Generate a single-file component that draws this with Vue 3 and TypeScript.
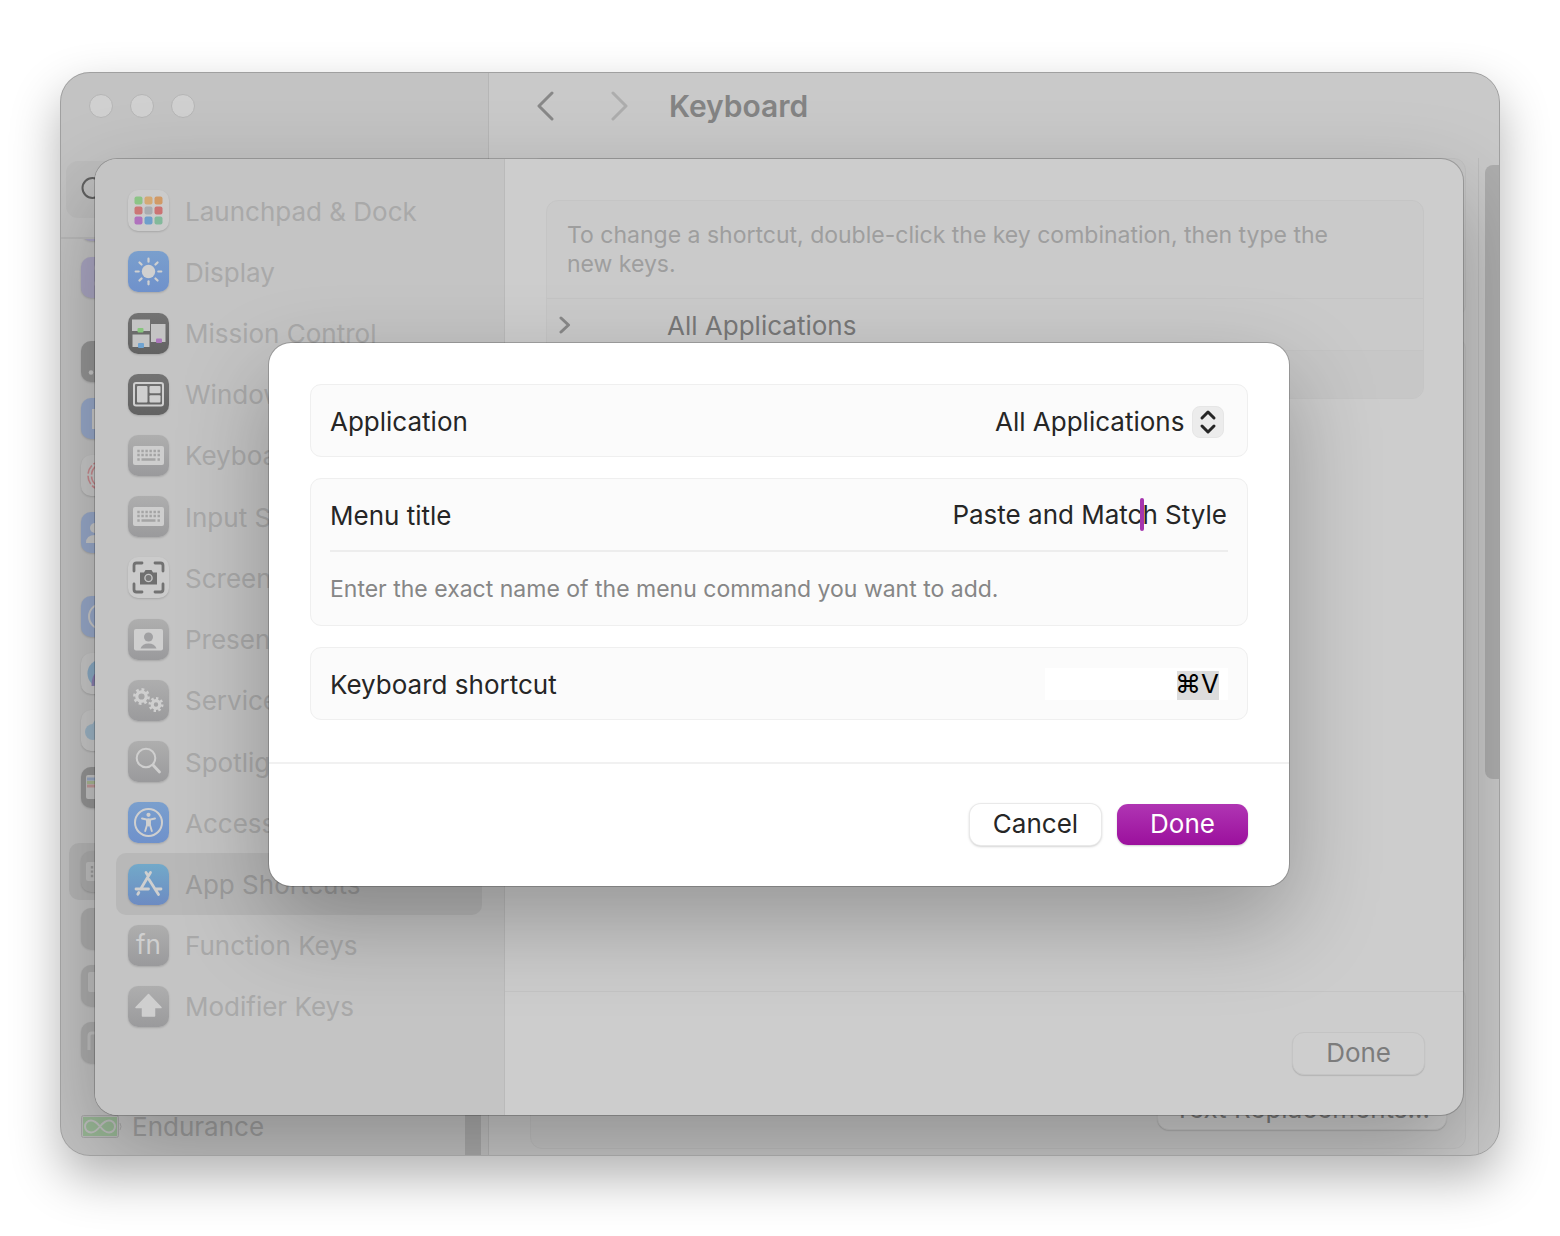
<script setup lang="ts">
import { ref } from 'vue'

interface Pane {
  label: string
  tone: string
  art: string
}

const keyboardArt =
  '<rect x="5" y="11" width="31" height="19" rx="2" fill="#cecece"/>' +
  '<g stroke="#a4a4a4" stroke-width="2.4" fill="none">' +
  '<path d="M9.3 16H32" stroke-dasharray="2.4 1.65"/><path d="M9.3 20H32" stroke-dasharray="2.4 1.65"/>' +
  '<path d="M9.3 24.5h2.4M13.5 24.5h14M29.5 24.5h2.4"/></g>'

const gear = (x: number, y: number, r: number) =>
  `<circle cx="${x}" cy="${y}" r="${r}" stroke-width="3.2"/>` +
  `<circle cx="${x}" cy="${y}" r="${r + 2.4}" stroke-width="2.6" pathLength="16" stroke-dasharray="1 1"/>`

const launchColors = ['#8cc486', '#d3a975', '#d19a66', '#cb7676', '#a9acb0', '#cb7373', '#b072bd', '#6f9fcb', '#83b99b']

const panes: Pane[] = [
  {
    label: 'Launchpad & Dock',
    tone: 'white',
    art: launchColors
      .map((c, i) => `<rect x="${6.5 + (i % 3) * 10}" y="${6.5 + Math.floor(i / 3) * 10}" width="8" height="8" rx="2" fill="${c}"/>`)
      .join(''),
  },
  {
    label: 'Display',
    tone: 'blue',
    art:
      '<circle cx="20.5" cy="20.5" r="6.7" fill="#d0d0d0"/><g stroke="#d0d0d0" stroke-width="2.2" stroke-linecap="round">' +
      [0, 45, 90, 135, 180, 225, 270, 315].map((a) => `<path d="M20.5 7.7v3" transform="rotate(${a} 20.5 20.5)"/>`).join('') +
      '</g>',
  },
  {
    label: 'Mission Control',
    tone: 'dark',
    art:
      '<g fill="#c4c4c4"><rect x="4" y="6.5" width="18" height="11.5"/><rect x="4.5" y="21.5" width="17" height="12.5"/><rect x="23" y="11" width="14.5" height="18"/></g>' +
      '<rect x="9.5" y="15" width="6" height="4.5" rx="1" fill="#87c57d"/><rect x="10" y="30" width="6" height="5" rx="1" fill="#6fa3d1"/><rect x="28" y="25.5" width="6" height="4.5" rx="1" fill="#ab77bb"/>',
  },
  {
    label: 'Windows',
    tone: 'dark',
    art:
      '<rect x="6" y="9" width="29" height="22.5" rx="2" fill="none" stroke="#cfcfcf" stroke-width="2"/>' +
      '<g fill="#cfcfcf"><rect x="9" y="12" width="10.5" height="16.5" rx="1"/><rect x="21.5" y="12" width="11" height="7.3" rx="1"/><rect x="21.5" y="21.3" width="11" height="7.2" rx="1"/></g>',
  },
  { label: 'Keyboard', tone: 'gray', art: keyboardArt },
  { label: 'Input Sources', tone: 'gray', art: keyboardArt },
  {
    label: 'Screenshots',
    tone: 'white',
    art:
      '<path d="M6 14V8.5Q6 6 8.5 6H14M27 6h5.5Q35 6 35 8.5V14M35 27v5.5Q35 35 32.5 35H27M14 35H8.5Q6 35 6 32.5V27" fill="none" stroke="#727272" stroke-width="2.8" stroke-linecap="round"/>' +
      '<path d="M12 15.5h4l1.5-2.5h6l1.5 2.5h4V27.5H12Z" fill="#6f6f6f"/><circle cx="20.5" cy="21" r="3.6" fill="#777" stroke="#c4c4c4" stroke-width="1.4"/>',
  },
  {
    label: 'Presenter Overlay',
    tone: 'gray',
    art:
      '<rect x="6" y="10" width="29" height="21.5" rx="2" fill="#cfcfcf"/><circle cx="20.5" cy="18" r="4.5" fill="#a0a0a2"/><path d="M12.5 29.5q2-5 8-5t8 5Z" fill="#a0a0a2"/>',
  },
  {
    label: 'Services',
    tone: 'gray',
    art: `<g fill="none" stroke="#cfcfcf">${gear(13.5, 16.5, 4.7)}${gear(28, 24.5, 3.8)}</g>`,
  },
  {
    label: 'Spotlight',
    tone: 'gray',
    art:
      '<g fill="none" stroke="#cfcfcf" stroke-linecap="round"><circle cx="18" cy="17" r="9.3" stroke-width="2"/><path d="m25 24 6.5 7" stroke-width="2.8"/></g>',
  },
  {
    label: 'Accessibility',
    tone: 'blue',
    art:
      '<g fill="none" stroke="#cfcfcf" stroke-linecap="round" stroke-linejoin="round"><circle cx="20.5" cy="20.5" r="13.5" stroke-width="2"/>' +
      '<path d="M14 16.5l4.5 1h4l4.5-1" stroke-width="1.9"/><path d="M19 18v5l-1.8 6M22 18v5l1.8 6" stroke-width="1.9"/><path d="M20.5 18v5" stroke-width="3"/></g><circle cx="20.5" cy="12.8" r="2.1" fill="#cfcfcf"/>',
  },
  {
    label: 'App Shortcuts',
    tone: 'store',
    art:
      '<g fill="none" stroke="#cfcfcf" stroke-width="2.8" stroke-linecap="round"><path d="M22.5 8.5 13.3 24M18 8.5l2 3.2M10.8 28.5l-1 1.8M21 15.5l9.5 15M8 25h12.5M27.5 25H33"/></g>',
  },
  { label: 'Function Keys', tone: 'gray', art: '' },
  {
    label: 'Modifier Keys',
    tone: 'gray',
    art: '<path d="M20.5 8.5 33 21.5H26.5V30H14.5V21.5H8Z" fill="#cfcfcf" stroke="#cfcfcf" stroke-width="1.5" stroke-linejoin="round"/>',
  },
]

/* Only the leading edge of these icons shows beside the sheet. */
const settingsGroups: { tone: string; art: string }[][] = [
  [
    { tone: 'purple', art: '' },
    { tone: 'purple', art: '<path d="M15 8q-2 4 1 7v8q-3 3-1 6" stroke="#c4bfcf" fill="none" stroke-width="2"/>' },
  ],
  [
    { tone: 'mid', art: '<circle cx="10" cy="31.5" r="2.3" fill="#c6c6c6"/>' },
    { tone: 'dullblue', art: '<rect x="11" y="11" width="20" height="20" fill="#c9c9c9"/>' },
    {
      tone: 'pale',
      art: '<g fill="none" stroke="#c98a8e" stroke-width="1.6" stroke-dasharray="9 2"><ellipse cx="20" cy="20.5" rx="13" ry="14"/><ellipse cx="20" cy="20.5" rx="9.5" ry="11"/></g>',
    },
    { tone: 'dullblue', art: '<circle cx="14" cy="16" r="5" fill="#c9c9c9"/><path d="M5 31q0-8 9-8t9 8Z" fill="#c9c9c9"/>' },
  ],
  [
    { tone: 'dullblue', art: '<circle cx="20.5" cy="20.5" r="12.5" fill="none" stroke="#c9c9c9" stroke-width="2"/>' },
    { tone: 'pale', art: '<circle cx="20.5" cy="20.5" r="14" fill="#8aaac4"/><path d="M12 33q0-10 4-12" stroke="#8d80b0" stroke-width="3" fill="none"/>' },
    { tone: 'pale', art: '<circle cx="12" cy="22" r="8" fill="#9db5c6"/><circle cx="20" cy="17" r="9" fill="#9db5c6"/>' },
    {
      tone: 'mid',
      art: '<rect x="5" y="8" width="30" height="24" rx="2" fill="#c4c4c4"/><path d="M6 12h14" stroke="#98a8c2" stroke-width="3"/><path d="M6 15.5h14" stroke="#abb893" stroke-width="3"/><path d="M6 19h14" stroke="#c29a9a" stroke-width="3"/>',
    },
  ],
  [
    { tone: 'slate', art: '<rect x="5" y="11" width="31" height="19" rx="2" fill="#c0c0c0"/><path d="M11 15v12" stroke="#9c9c9c" stroke-width="2.4" stroke-dasharray="2.4 2"/>' },
    { tone: 'slate', art: '' },
    { tone: 'slate', art: '<rect x="7" y="7" width="22" height="20" rx="2" fill="#c0c0c0"/>' },
    { tone: 'slate', art: '<path d="M8 28V14q0-3 3-3h14" fill="none" stroke="#c0c0c0" stroke-width="3"/>' },
  ],
]

const application = ref('All Applications')
const menuTitle = ref('Paste and Match Style')
const shortcut = ref('⌘V')
</script>

<template>
  <div class="desktop">
    <div class="window">
      <aside class="sidebar">
        <div class="lights"><i></i><i></i><i></i></div>
        <div class="search">
          <svg width="28" height="28" viewBox="0 0 28 28" fill="none" stroke="#606060" stroke-width="2">
            <circle cx="11.5" cy="12" r="10" />
            <path d="m19 19 7 7" />
          </svg>
        </div>
        <div class="settings">
          <div v-for="(group, g) in settingsGroups" :key="g" class="group">
            <div v-for="(item, i) in group" :key="i" class="setting" :class="{ current: g === 3 && i === 0 }">
              <span class="icon" :class="item.tone"><svg viewBox="0 0 41 41" v-html="item.art"></svg></span>
            </div>
          </div>
          <div class="setting battery">
            <svg width="41" height="24" viewBox="0 0 41 24">
              <rect x="0.5" y="0.5" width="37" height="22" rx="2" fill="#bcbcbc" stroke="#a8a8a8" />
              <rect x="2" y="2" width="34" height="19" fill="#99b896" />
              <path d="M39 8q2 3.5 0 7" stroke="#a8a8a8" fill="none" />
              <path d="M19 11.5c-4-5-6-6-9-6a6 6 0 0 0 0 12c3 0 5-1 9-6s6-6 9-6a6 6 0 0 1 0 12c-3 0-5-1-9-6Z" fill="none" stroke="#bfbfbf" stroke-width="2" />
            </svg>
            <span>Endurance</span>
          </div>
          <div class="side-scroll"></div>
        </div>
      </aside>

      <main class="main">
        <header class="toolbar">
          <button class="nav" aria-label="Back">
            <svg width="18" height="30" viewBox="0 0 18 30"><path d="M16 2 3 15l13 13" /></svg>
          </button>
          <button class="nav off" aria-label="Forward">
            <svg width="18" height="30" viewBox="0 0 18 30"><path d="m2 2 13 13L2 28" /></svg>
          </button>
          <h1>Keyboard</h1>
        </header>
        <div class="content">
          <div class="cards">
            <section class="card short"></section>
            <section class="card tall"></section>
            <section class="card last"><button class="push">Text Replacements…</button></section>
          </div>
          <div class="track"><div class="thumb"></div></div>
        </div>
      </main>

      <div class="sheet">
        <nav class="panes">
          <a v-for="pane in panes" :key="pane.label" href="#" class="pane" :class="{ selected: pane.label === 'App Shortcuts' }">
            <span class="icon" :class="pane.tone">
              <span v-if="pane.label === 'Function Keys'" class="fn">fn</span>
              <svg v-else viewBox="0 0 41 41" v-html="pane.art"></svg>
            </span>
            <span class="name">{{ pane.label }}</span>
          </a>
        </nav>
        <section class="shortcuts">
          <div class="list">
            <p>To change a shortcut, double-click the key combination, then type the new keys.</p>
            <button class="entry">
              <svg width="14" height="18" viewBox="0 0 14 18"><path d="m3 2 7.5 7L3 16" /></svg>
              <span>All Applications</span>
            </button>
            <div class="tools"></div>
          </div>
          <footer class="sheet-foot"><button class="push">Done</button></footer>
        </section>
      </div>

      <form class="dialog" @submit.prevent>
        <div class="fields">
          <div class="box row">
            <label for="application">Application</label>
            <div class="popup">
              <select id="application" v-model="application">
                <option>All Applications</option>
              </select>
              <span class="stepper">
                <svg width="18" height="26" viewBox="0 0 18 26"><path d="m3 9 6-6 6 6M3 17l6 6 6-6" /></svg>
              </span>
            </div>
          </div>
          <div class="box">
            <div class="row title-row">
              <label for="menu-title">Menu title</label>
              <div class="entry-field">
                <input id="menu-title" v-model="menuTitle" type="text" />
                <span class="caret"></span>
              </div>
            </div>
            <p class="hint">Enter the exact name of the menu command you want to add.</p>
          </div>
          <div class="box row">
            <label for="shortcut">Keyboard shortcut</label>
            <input id="shortcut" v-model="shortcut" class="keys" type="text" />
          </div>
        </div>
        <footer class="actions">
          <button type="button" class="cancel">Cancel</button>
          <button type="submit" class="done">Done</button>
        </footer>
      </form>
    </div>
  </div>
</template>

<style>
body {
  margin: 0;
  background: #fff;
}
</style>

<style scoped>
* {
  box-sizing: border-box;
}
.desktop {
  display: flex;
  min-height: 100vh;
  padding: 72px 60px 80px;
  font-family: Inter, 'Liberation Sans', sans-serif;
  font-size: 26px;
  line-height: 32px;
  color: #262626;
}
button,
input,
select {
  font: inherit;
  color: inherit;
  border: 0;
  padding: 0;
  margin: 0;
  background: none;
  outline: 0;
}
p,
h1 {
  margin: 0;
}
svg {
  display: block;
}
.window {
  position: relative;
  display: flex;
  flex: 1;
  border-radius: 30px;
  overflow: hidden;
  background: #c9c9c9;
  box-shadow: 0 22px 50px rgba(0, 0, 0, 0.3);
}
.window::after {
  content: '';
  position: absolute;
  inset: 0;
  border: 1px solid #a0a0a0;
  border-radius: 30px;
  pointer-events: none;
}
.sidebar {
  display: flex;
  flex-direction: column;
  width: 429px;
  background: #c3c3c3;
  border-right: 1px solid #b6b6b6;
}
.lights {
  display: flex;
  gap: 17px;
  height: 89px;
  padding: 22px 0 0 29px;
}
.lights i {
  width: 24px;
  height: 24px;
  border: 1px solid #b5b5b5;
  border-radius: 50%;
  background: #d0d0d0;
}
.search {
  height: 57px;
  margin: 0 14px 19px 6px;
  padding: 15px 0 0 15px;
  border-radius: 12px;
  background: #bdbdbd;
}
.settings {
  position: relative;
  flex: 1;
  min-height: 0;
  overflow: hidden;
  padding: 0 14px 0 9px;
  border-top: 2px solid #b8b8b8;
}
.group {
  margin-bottom: 27px;
}
.group:first-child {
  margin-top: -47px;
}
.setting {
  display: flex;
  align-items: center;
  height: 57px;
  padding: 0 12px;
  border-radius: 10px;
}
.setting.current {
  background: #b6b6b6;
}
.battery {
  gap: 10px;
  color: #a0a0a0;
}
.side-scroll {
  position: absolute;
  top: 40px;
  right: 7px;
  bottom: 0;
  width: 16px;
  background: #acacac;
}
.main {
  display: flex;
  flex: 1;
  flex-direction: column;
  min-width: 0;
}
.toolbar {
  display: flex;
  align-items: center;
  height: 67px;
  margin-bottom: 19px;
  padding-left: 47px;
}
.nav {
  margin-right: 57px;
}
.nav + .nav {
  margin-right: 40px;
}
.nav path,
.entry path,
.stepper path {
  fill: none;
  stroke: #888;
  stroke-width: 3;
  stroke-linecap: round;
  stroke-linejoin: round;
}
.nav.off path {
  stroke: #adadad;
}
h1 {
  font-size: 30px;
  line-height: 36px;
  font-weight: 600;
  color: #848484;
}
.content {
  display: flex;
  flex: 1;
}
.cards {
  display: flex;
  flex: 1;
  flex-direction: column;
  gap: 20px;
  padding: 0 12px 7px 41px;
  border-right: 1px solid #bcbcbc;
}
.card {
  border: 1px solid #c1c1c1;
  border-radius: 12px;
  background: #c7c7c7;
}
.short {
  flex: 1;
}
.tall {
  flex: 4;
}
.last {
  display: flex;
  align-items: flex-end;
  justify-content: flex-end;
  height: 163px;
  padding: 0 18px 18px;
}
.push {
  height: 43px;
  padding: 0 33px 2px;
  border: 1px solid #c4c4c4;
  border-radius: 12px;
  background: #cecece;
  color: #7c7c7c;
  box-shadow: 0 1px 1px rgba(0, 0, 0, 0.12);
}
.last .push {
  padding: 0 16px;
}
.track {
  width: 21px;
  padding: 7px 0 0 6px;
}
.thumb {
  height: 62%;
  border-radius: 8px 0 0 8px;
  background: #adadad;
}
.sheet {
  position: absolute;
  inset: 87px 37px 41px 35px;
  display: flex;
  overflow: hidden;
  border-radius: 22px;
  background: #cdcdcd;
}
.sheet,
.dialog {
  box-shadow:
    0 0 0 1px rgba(0, 0, 0, 0.2),
    0 36px 90px rgba(0, 0, 0, 0.27);
}
.panes {
  display: flex;
  flex-direction: column;
  width: 410px;
  padding: 21px 22px 78px 21px;
  background: #c4c4c4;
  border-right: 1px solid #bababa;
}
.pane {
  display: flex;
  flex: 1;
  align-items: center;
  gap: 16px;
  padding: 0 12px;
  border-radius: 10px;
  color: #a9a9a9;
  text-decoration: none;
  white-space: nowrap;
}
.pane.selected {
  background: #b8b8b8;
  color: #9c9c9c;
}
.name,
.entry span,
label {
  padding-top: 2px;
}
.icon {
  flex: none;
  width: 41px;
  height: 41px;
  border-radius: 10px;
  box-shadow: 0 1px 2px rgba(0, 0, 0, 0.15);
}
.icon svg {
  width: 41px;
  height: 41px;
}
.fn {
  display: block;
  line-height: 39px;
  text-align: center;
  color: #cfcfcf;
}
.white {
  background: #cbcbcb;
}
.blue {
  background: linear-gradient(#7a9fcd, #6f91cb);
}
.store {
  background: linear-gradient(#72a9c9, #6d8bc2);
}
.dark {
  background: linear-gradient(#737373, #626262);
}
.gray {
  background: linear-gradient(#aeaeae, #9a9a9c);
}
.purple {
  background: #aaa6c2;
}
.mid {
  background: #959595;
}
.dullblue {
  background: #98a9ca;
}
.pale {
  background: #c9c9c9;
}
.slate {
  background: #adadad;
}
.shortcuts {
  display: flex;
  flex: 1;
  flex-direction: column;
  justify-content: space-between;
  min-width: 0;
}
.list {
  margin: 41px 39px 0 41px;
  border: 1px solid #c5c5c5;
  border-radius: 12px;
  background: #cacaca;
}
.list p {
  padding: 20px 80px 19px 20px;
  font-size: 23px;
  line-height: 29px;
  color: #9e9e9e;
}
.entry {
  display: flex;
  align-items: center;
  gap: 95px;
  width: 100%;
  height: 53px;
  padding: 0 11px;
  border: solid #c4c4c4;
  border-width: 1px 0;
  color: #787878;
}
.tools {
  height: 47px;
  border-radius: 0 0 12px 12px;
  background: #c7c7c7;
}
.sheet-foot {
  display: flex;
  justify-content: flex-end;
  padding: 40px 38px;
  border-top: 1px solid #c4c4c4;
}
.dialog {
  position: absolute;
  top: 271px;
  left: 209px;
  right: 211px;
  border-radius: 22px;
  background: #fff;
}
.fields {
  display: flex;
  flex-direction: column;
  gap: 21px;
  padding: 41px 41px 42px;
}
.box {
  border: 1px solid #efefef;
  border-radius: 11px;
  padding: 0 19px;
  background: #fbfbfb;
}
.row {
  display: flex;
  align-items: center;
  justify-content: space-between;
  min-height: 73px;
}
.title-row {
  border-bottom: 2px solid #ededed;
}
.popup {
  position: relative;
  margin: 2px 4px 0 0;
}
select {
  display: block;
  appearance: none;
  height: 32px;
  padding-right: 39px;
}
.stepper {
  position: absolute;
  top: 0;
  right: 0;
  display: grid;
  place-items: center;
  width: 32px;
  height: 32px;
  border: 1px solid #e6e6e6;
  border-radius: 8px;
  background: #ececec;
  pointer-events: none;
}
.stepper path {
  stroke: #262626;
}
.entry-field {
  position: relative;
  width: 440px;
}
input {
  display: block;
  height: 34px;
  text-align: right;
}
.entry-field input {
  width: 100%;
  padding-right: 1px;
}
.caret {
  position: absolute;
  top: 0;
  right: 84px;
  width: 4px;
  height: 33px;
  border-radius: 2px;
  background: #a535ae;
}
.hint {
  padding: 23px 0 21px;
  font-size: 23px;
  line-height: 29px;
  color: #868686;
}
.keys {
  width: 183px;
  height: 32px;
  padding-right: 9px;
  color: #000;
  background: linear-gradient(#dcdcdc, #dcdcdc) right 9px bottom / 42px 29px no-repeat #fff;
}
.actions {
  display: flex;
  justify-content: flex-end;
  gap: 16px;
  padding: 40px 41px 41px;
  border-top: 2px solid #f1f1f1;
}
.actions button {
  width: 131px;
  height: 41px;
  padding-bottom: 2px;
  border-radius: 11px;
}
.cancel {
  background: #fff;
  box-shadow:
    0 0 0 1px #e9e9e9,
    0 1px 3px rgba(0, 0, 0, 0.35);
}
.done {
  color: #fff;
  background: linear-gradient(#b035b3, #9b109d);
  box-shadow: 0 1px 2px rgba(0, 0, 0, 0.2);
}
</style>
